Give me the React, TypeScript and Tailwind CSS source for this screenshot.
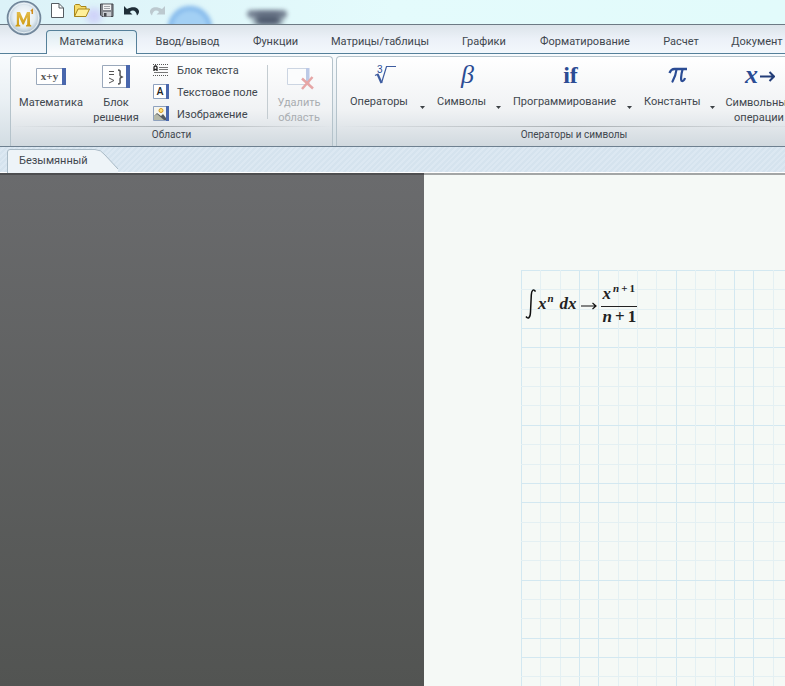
import type { ReactNode } from 'react';

interface RibbonTab {
  title: string;
  className: string;
}

const ribbonTabs: RibbonTab[] = [
  { title: 'Математика', className: 'w-[91px]' },
  { title: 'Ввод/вывод', className: 'w-[101px]' },
  { title: 'Функции', className: 'w-[75px]' },
  { title: 'Матрицы/таблицы', className: 'w-[134px]' },
  { title: 'Графики', className: 'w-[74px]' },
  { title: 'Форматирование', className: 'w-[128px]' },
  { title: 'Расчет', className: 'w-16' },
  { title: 'Документ', className: 'w-[88px]' },
];

const CELL = 19.35;
const strongColumns = [0, 3, 4, 8, 11, 12];
const strongRows = [0, 3, 4, 8, 11, 12, 16, 19, 20];

function Logo() {
  return (
    <svg viewBox="0 0 36 36" className="size-9">
      <defs>
        <radialGradient id="orb" cx="50%" cy="45%" r="55%">
          <stop offset="0" stopColor="#ffffff" />
          <stop offset="0.6" stopColor="#e4edf3" />
          <stop offset="1" stopColor="#9db2c3" />
        </radialGradient>
        <linearGradient id="gold" x1="0" y1="0" x2="0" y2="1">
          <stop offset="0" stopColor="#e2bb4a" />
          <stop offset="1" stopColor="#cf9a10" />
        </linearGradient>
      </defs>
      <circle cx="18" cy="18" r="16.5" fill="url(#orb)" stroke="#71869a" strokeWidth="1.6" />
      <circle cx="18" cy="18" r="14.8" fill="none" stroke="#f5fafc" strokeWidth="0.8" />
      <path d="M9.500 26.500V25.500L10.800 24.500V12H14L17.500 20L21 12H24V24.500L25.300 25.500V26.500H20V25.500L21.200 24.500V17L17.800 24.500H16.600L13 17V24.500L14.300 25.500V26.500Z" fill="url(#gold)" />
      <path d="M24.800 11L26.300 9.800V14" fill="none" stroke="#d08a1c" strokeWidth="1.500" />
    </svg>
  );
}

function QuickButton({ label, children }: { label: string; children: ReactNode }) {
  return (
    <button type="button" aria-label={label} className="size-4">
      <svg viewBox="0 0 16 16" className="size-4">{children}</svg>
    </button>
  );
}

function QuickAccess() {
  return (
    <div className="flex gap-[9px] pt-[3px] pl-[9px]">
      <QuickButton label="Создать">
        <path d="M2.500 .5H10l4.500 4.500v9.500h-12z" fill="#fff" stroke="#555c62" />
        <path d="M10 .5V5h4.500" fill="none" stroke="#555c62" />
      </QuickButton>
      <QuickButton label="Открыть">
        <path d="M.5 13.500v-11l1-1h4l1.500 2h5v2.500" fill="#f6dc6a" stroke="#a8861c" />
        <path d="M.5 13.500l3.500-7.500h11.500l-3.500 7.500z" fill="#fff09a" stroke="#a8861c" />
      </QuickButton>
      <QuickButton label="Сохранить">
        <path d="M1.500 1h12.500v12.500h-11l-1.500-1.500z" fill="#85888f" stroke="#44474d" />
        <path d="M4 1.500h8v5.500H4z" fill="#f1f2f3" />
        <path d="M4 9h8v4.500H4z" fill="#c8cbd0" />
        <path d="M5 10h2.500v3.500H5z" fill="#44474d" />
        <path d="M5 3.500h6M5 5.500h6" stroke="#a1a4aa" />
      </QuickButton>
      <QuickButton label="Отменить">
        <path d="M0 3V11.500h8.500L5.800 9C8.500 6.500 12 7 13 12.500C18.500 7.500 12 1 3 6z" fill="#1f2e38" />
      </QuickButton>
      <QuickButton label="Повторить">
        <path d="M16 3V11.500H7.500L10.200 9C7.500 6.500 4 7 3 12.500C-2.500 7.500 4 1 13 6z" fill="#bcc9cf" />
      </QuickButton>
    </div>
  );
}

function TabStrip() {
  return (
    <nav className="flex h-[29px] items-end border-b border-[#55809a] bg-linear-to-b from-[#dce4ea] via-[#ecf1f8] to-[#f3f8fc] pl-[46px]">
      {ribbonTabs.map((tab, index) => (
        <button
          key={tab.title}
          type="button"
          className={`-mb-px h-6 shrink-0 border border-b-0 pb-px text-center text-[11px] whitespace-nowrap text-[#3f474e] ${tab.className} ${
            index === 0 ? 'rounded-t border-[#55809a] bg-linear-to-b from-[#dcebf2] to-[#fcfdfe]' : 'border-transparent'
          }`}
        >
          {tab.title}
        </button>
      ))}
    </nav>
  );
}

function RibbonGroup({ title, className, children }: { title: string; className: string; children: ReactNode }) {
  return (
    <section className={`flex h-[90px] flex-col rounded-t border border-b-0 border-[#b5c3cb] bg-linear-to-b from-white via-[#f0f2f4] via-60% to-[#d1d9df] ${className}`}>
      <div className="flex h-[69px]">{children}</div>
      <div className="h-px bg-linear-to-r from-transparent via-[#a9afb3] to-transparent" />
      <h2 className="h-4 text-center text-[10px] leading-4 text-[#3f474e]">{title}</h2>
    </section>
  );
}

function LargeButton({ label, className, disabled, children }: { label: string; className: string; disabled?: boolean; children: ReactNode }) {
  return (
    <button
      type="button"
      disabled={disabled}
      className={`flex shrink-0 flex-col items-center pt-1 text-[11px] leading-[15px] text-[#3f474e] disabled:text-[#a9adb1] ${className}`}
    >
      <span className="flex h-[34px] items-start justify-center">{children}</span>
      <span className="whitespace-pre-line">{label}</span>
    </button>
  );
}

function MenuButton({ label, className, children }: { label: string; className: string; children: ReactNode }) {
  return (
    <button type="button" className={`flex shrink-0 items-start justify-between pt-1 text-[11px] leading-[15px] text-[#3f474e] ${className}`}>
      <span className="flex flex-col items-center">
        <span className="flex h-[33px] items-start justify-center pt-[2px] pl-3 text-[#2b4c94]">{children}</span>
        <span>{label}</span>
      </span>
      <svg viewBox="0 0 5 3" className="mt-[45px] h-[3px] w-[5px]">
        <path d="M0 0h5L2.500 3z" fill="#3c4145" />
      </svg>
    </button>
  );
}

function SmallButton({ label, children }: { label: string; children: ReactNode }) {
  return (
    <button type="button" className="flex h-[22px] items-center gap-2 text-[11px] whitespace-nowrap text-[#3f474e]">
      <svg viewBox="0 0 16 16" className="size-4">{children}</svg>
      <span className="pt-[2px]">{label}</span>
    </button>
  );
}

function AreasGroup() {
  return (
    <RibbonGroup title="Области" className="w-[323px] shrink-0">
      <LargeButton label="Математика" className="w-20">
        <svg viewBox="0 0 32 30" className="h-[30px] w-8">
          <path d="M1.500 7.500h27v16h-27z" fill="#fff" stroke="#9aa8bb" />
          <path d="M27 7h4v17h-4z" fill="#4967ad" />
          <text x="14.500" y="19" textAnchor="middle" fontFamily="Liberation Serif" fontWeight="bold" fontSize="11" fill="#555">x+y</text>
        </svg>
      </LargeButton>
      <LargeButton label={'Блок\nрешения'} className="w-[50px]">
        <svg viewBox="0 0 30 30" className="size-[30px]">
          <path d="M1.500 4.500h25v22h-25z" fill="#fff" stroke="#9aa8bb" />
          <path d="M25 4h4v23H25z" fill="#4967ad" />
          <path d="M8 10.500h5M8 13.500h5M8 17l5 2.500L8 22" fill="none" stroke="#555" />
          <path d="M17 9c3 0 2 2 2 4s0 2 2 3c-2 1-2 1-2 3s1 4-2 4" fill="none" stroke="#555" strokeWidth="1.500" />
        </svg>
      </LargeButton>
      <div className="ml-3 flex w-[114px] flex-col pt-[2px]">
        <SmallButton label="Блок текста">
          <path d="M0 2.500h16M0 13.500h16" stroke="#555" strokeDasharray="1 1" />
          <path d="M6 5.500h9M6 7.500h9M1 10.500h14" stroke="#777" />
          <path d="M1 9V5l1-1h1l1 1v4M1 7.500h3" fill="none" stroke="#222" strokeWidth="1.300" />
        </SmallButton>
        <SmallButton label="Текстовое поле">
          <path d="M.5 .5h13v14H.5z" fill="#fff" stroke="#8ea1be" />
          <path d="M13 0h3v15H13z" fill="#4967ad" />
          <text x="7" y="11" textAnchor="middle" fontFamily="Open Sans" fontWeight="600" fontSize="10" fill="#222">A</text>
        </SmallButton>
        <SmallButton label="Изображение">
          <path d="M.5 .5h13v14H.5z" fill="#f5f5ee" stroke="#8ea1be" />
          <path d="M13 0h3v15H13z" fill="#4967ad" />
          <circle cx="8" cy="4.500" r="2" fill="#ffe27a" stroke="#d89a21" />
          <path d="M1 14V10l3-3 4 3 2-2 3 4v2z" fill="#555b5f" />
          <path d="M1 10l3-2 7 6H1z" fill="#b5b8a8" />
        </SmallButton>
      </div>
      <div className="mt-2 h-[54px] w-px bg-[#c4ccd1]" />
      <LargeButton label={'Удалить\nобласть'} className="w-[62px]" disabled>
        <svg viewBox="0 0 32 30" className="h-[30px] w-8">
          <path d="M4.500 7.500h21v16h-21z" fill="#fbfcfd" stroke="#ccd5e2" />
          <path d="M23 7h3.500v17H23z" fill="#bcc9e6" />
          <path d="M19 17.500l11 10M29.500 16L19 28" stroke="#e6a6a6" strokeWidth="2.500" />
        </svg>
      </LargeButton>
    </RibbonGroup>
  );
}

function OperatorsGroup() {
  return (
    <RibbonGroup title="Операторы и символы" className="min-w-[476px] flex-1">
      <MenuButton label="Операторы" className="ml-[13px] w-[75px]">
        <svg viewBox="0 0 22 24" className="h-6 w-[22px]">
          <path d="M1 12.500l3-1.500M7.500 20L12.500 3.500H22" fill="none" stroke="#3d5ca0" strokeWidth="1.200" />
          <path d="M3.500 11l4 9" stroke="#3d5ca0" strokeWidth="2.200" />
          <text x="3" y="10" fontFamily="Liberation Sans" fontSize="10" fill="#2b4c94">3</text>
        </svg>
      </MenuButton>
      <MenuButton label="Символы" className="ml-3 w-16">
        <span className="font-['Liberation_Serif'] text-[26px] leading-6 italic">β</span>
      </MenuButton>
      <MenuButton label="Программирование" className="ml-3 w-[119px]">
        <span className="font-['Liberation_Serif'] text-2xl leading-6 font-bold">if</span>
      </MenuButton>
      <MenuButton label="Константы" className="ml-3 w-[71px]">
        <svg viewBox="0 0 20 20" className="mt-px size-5">
          <path d="M1.500 9C3 5.500 4 5 6.500 5H19" fill="none" stroke="#2b4c94" strokeWidth="2.400" />
          <path d="M8.500 5.500C8 10 7 13 4.500 17.500" fill="none" stroke="#2b4c94" strokeWidth="2.200" strokeLinecap="round" />
          <path d="M14.500 5.500C13 11 12.500 17 14 17C15.500 17.300 16.500 15.500 17 14" fill="none" stroke="#2b4c94" strokeWidth="2.200" />
        </svg>
      </MenuButton>
      <LargeButton label={'Символьные\nоперации'} className="ml-3 w-16">
        <svg viewBox="0 0 32 28" className="h-7 w-8">
          <text x="2" y="22" fontFamily="Liberation Serif" fontStyle="italic" fontWeight="bold" fontSize="26" fill="#2b4c94">x</text>
          <path d="M17 15.500h14M26.500 11l4.500 4.500L26.500 20" fill="none" stroke="#233d78" strokeWidth="2" />
        </svg>
      </LargeButton>
    </RibbonGroup>
  );
}

function DocumentTabs() {
  return (
    <div className="h-[26px] border-b border-white bg-[repeating-linear-gradient(135deg,#d5e3ee_0_2px,#dce8f2_2px_4px)] pt-[2px] pl-[7px]">
      <button type="button" className="relative block h-6 w-28 pt-px pl-3 text-left text-[11px] text-[#3f474e]">
        <svg viewBox="0 0 112 24" className="absolute inset-0 h-6 w-28">
          <path d="M.5 24V3Q.5 .5 3 .5H88Q94 .5 98 6L111 20V24" fill="#eef4f8" />
          <path d="M.5 24V3Q.5 .5 3 .5H88Q94 .5 98 6L111 20" fill="none" stroke="#a9bac6" />
        </svg>
        <span className="relative">Безымянный</span>
      </button>
    </div>
  );
}

function Grid() {
  return (
    <svg className="absolute inset-0 size-full" shapeRendering="crispEdges">
      {Array.from({ length: 60 }, (_, i) => (
        <g key={i} strokeWidth="1">
          <line x1={i * CELL + 0.5} x2={i * CELL + 0.5} y1="0" y2="100%" stroke={strongColumns.includes(i) ? '#d3e8f1' : '#e4f0f3'} />
          <line y1={i * CELL + 0.5} y2={i * CELL + 0.5} x1="0" x2="100%" stroke={strongRows.includes(i) ? '#d3e8f1' : '#e4f0f3'} />
        </g>
      ))}
    </svg>
  );
}

function Formula() {
  return (
    <div className="relative flex items-center pt-[14px] pl-1 font-['Liberation_Serif'] text-[17px] leading-5 font-bold text-[#222] italic">
      <svg viewBox="0 0 11 30" className="-mt-1 h-[30px] w-[11px]">
        <path d="M10.500 2.500C8.500-.5 6.500 1 6.300 6L5.500 23C5.300 29 3 30.500 1 27.500" fill="none" stroke="#111" strokeWidth="1.500" />
      </svg>
      <span className="-mt-1 flex pl-[2px]">
        x<span className="-mt-[6px] pl-px text-[11px]">n</span>
      </span>
      <span className="-mt-1 ml-[6px]">dx</span>
      <svg viewBox="0 0 16 8" className="mx-1 h-2 w-4">
        <path d="M0 4h15M11.500 1L15 4L11.500 7" fill="none" stroke="#111" strokeWidth="1.200" />
      </svg>
      <span className="flex flex-col">
        <span className="flex border-b border-[#222] px-[2px] pb-[2px]">
          x
          <span className="-mt-[6px] flex gap-[2px] pl-[2px] text-[11px]">
            n<span className="not-italic">+</span><span className="not-italic">1</span>
          </span>
        </span>
        <span className="flex gap-[3px] pl-[2px]">
          n<span className="not-italic">+</span><span className="not-italic">1</span>
        </span>
      </span>
    </div>
  );
}

export default function App() {
  return (
    <div className="flex min-h-screen flex-col overflow-hidden bg-[#f5f9f6] font-['Roboto','Noto_Sans',sans-serif]">
      <header className="relative">
        <div className="relative h-[25px] overflow-hidden border-b border-[#6c7a84] bg-linear-to-r from-[#dcf2f8] via-[#e4fbfc] to-[#e2fbfb] pl-10">
          <div className="absolute top-2 left-[86px] h-4 w-4 rounded-full bg-[#cfd3f8] blur-[3px]" />
          <div className="absolute top-[6px] left-[168px] size-11 rounded-full border-4 border-[#7db4ea] bg-[#a3d0f4] blur-[2px]" />
          <div className="absolute top-[10px] left-[247px] h-2 w-10 rounded-full bg-[#7c8899] blur-[2px]" />
          <div className="absolute top-[14px] left-[254px] h-3 w-7 rounded-full bg-[#4d586c] blur-[3px]" />
          <div className="relative">
            <QuickAccess />
          </div>
        </div>
        <TabStrip />
        <button type="button" aria-label="Меню" className="absolute top-0 left-[6px]">
          <Logo />
        </button>
      </header>

      <div className="flex h-[93px] gap-[3px] overflow-hidden border-b border-[#6e8090] bg-linear-to-b from-[#f8fbfd] via-[#eaf0f4] to-[#d3dde3] pt-[2px] pl-[10px]">
        <AreasGroup />
        <OperatorsGroup />
      </div>

      <DocumentTabs />

      <main className="flex flex-1">
        <aside className="w-[54%] border-t-2 border-[#4d4e50] bg-linear-to-b from-[#6a6b6d] to-[#525452]" />
        <div className="flex flex-1 border-t-2 border-[#a3a6a6] pt-[95px] pl-[97px]">
          <div className="relative flex-1">
            <Grid />
            <Formula />
          </div>
        </div>
      </main>
    </div>
  );
}
